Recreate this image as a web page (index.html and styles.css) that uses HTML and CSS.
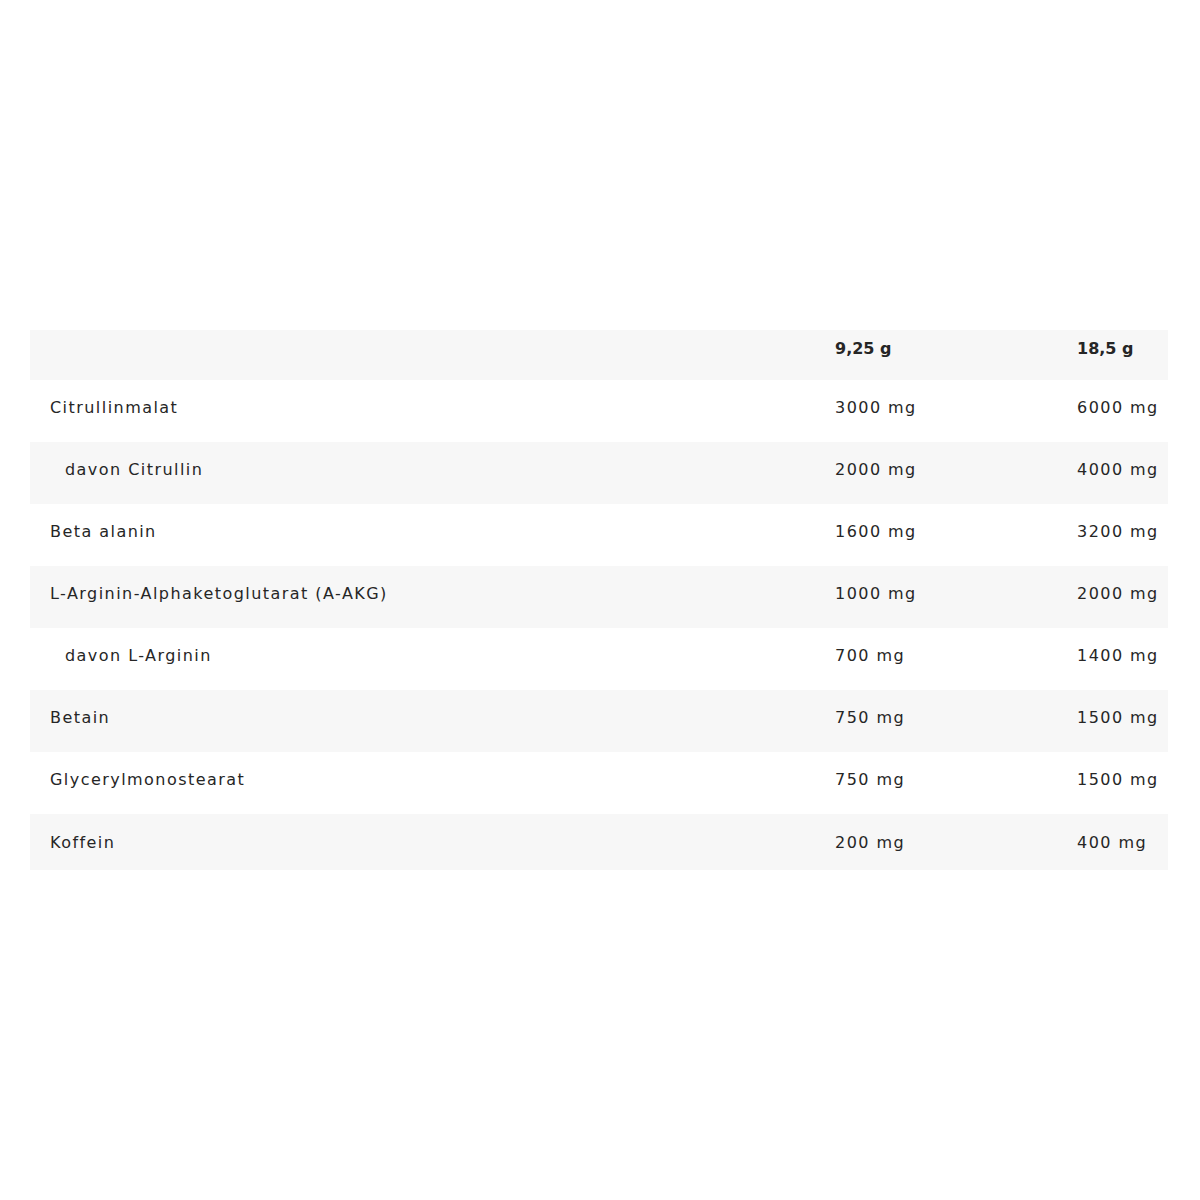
FILE: index.html
```html
<!DOCTYPE html>
<html lang="de">
<head>
<meta charset="utf-8">
<title>Nährwerte</title>
<link rel="stylesheet" href="styles.css">
</head>
<body>
<main class="page">
  <table class="nutri">
    <colgroup>
      <col class="c-name">
      <col class="c-one">
      <col class="c-two">
    </colgroup>
    <thead>
      <tr class="shade">
        <th></th>
        <th>9,25 g</th>
        <th>18,5 g</th>
      </tr>
    </thead>
    <tbody>
      <tr><td>Citrullinmalat</td><td>3000 mg</td><td>6000 mg</td></tr>
      <tr class="shade"><td class="sub">davon Citrullin</td><td>2000 mg</td><td>4000 mg</td></tr>
      <tr><td>Beta alanin</td><td>1600 mg</td><td>3200 mg</td></tr>
      <tr class="shade"><td>L-Arginin-Alphaketoglutarat (A-AKG)</td><td>1000 mg</td><td>2000 mg</td></tr>
      <tr><td class="sub">davon L-Arginin</td><td>700 mg</td><td>1400 mg</td></tr>
      <tr class="shade"><td>Betain</td><td>750 mg</td><td>1500 mg</td></tr>
      <tr><td>Glycerylmonostearat</td><td>750 mg</td><td>1500 mg</td></tr>
      <tr class="shade last"><td>Koffein</td><td>200 mg</td><td>400 mg</td></tr>
    </tbody>
  </table>
</main>
</body>
</html>
```

FILE: styles.css
```css
html, body {
  margin: 0;
  padding: 0;
  background: #ffffff;
}

.page {
  padding: 330px 32px 0 30px;
}

.nutri {
  width: 1138px;
  border-collapse: collapse;
  table-layout: fixed;
  font-family: "DejaVu Sans", "Liberation Sans", sans-serif;
  font-size: 16px;
  letter-spacing: 1.45px;
  color: #262626;
}

.c-name { width: 785px; }
.c-one { width: 242px; }
.c-two { width: 111px; }

.nutri th,
.nutri td {
  text-align: left;
  white-space: nowrap;
  vertical-align: middle;
}

.nutri th {
  height: 36px;
  padding: 0 0 14px 20px;
  font-weight: 700;
  letter-spacing: 0;
}

.nutri td {
  height: 54px;
  padding: 0 0 8px 20px;
  font-weight: 400;
}

.nutri td.sub {
  padding-left: 35px;
}

.nutri tr.last td {
  height: 56px;
  padding-bottom: 0;
}

.shade {
  background: #f7f7f7;
}
```
